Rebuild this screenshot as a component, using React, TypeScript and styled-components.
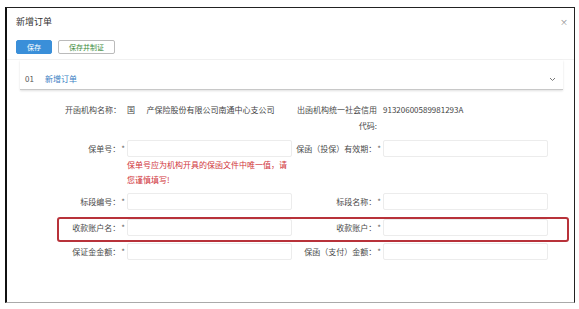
import styled, { createGlobalStyle } from "styled-components"

const GlobalStyle = createGlobalStyle`
    body {
        margin: 0;
        background: #fff;
        font-family: "Noto Sans CJK SC", "Noto Sans", sans-serif;
    }
`

const Frame = styled.div`
    box-sizing: border-box;
    margin: 7px 4px 0 5px;
    height: 296px;
    border-top: 1px solid #222;
    border-left: 2px solid #111;
    border-right: 1px solid #222;
    border-bottom: 1px solid #aaa;
    background: #fff;
`

const Header = styled.div`
    display: flex;
    justify-content: space-between;
    align-items: center;
    padding: 8px 6px 0 9px;
    height: 12px;
`

const Title = styled.span`
    font-size: 9px;
    line-height: 12px;
    color: #333;
`

const Close = styled.span`
    font-size: 8px;
    line-height: 12px;
    color: #888;
`

const Toolbar = styled.div`
    display: flex;
    gap: 6px;
    margin-top: 12px;
    padding: 0 0 5px 9px;
    border-bottom: 1px solid #f2f2f2;
`

const Button = styled.button<{ $primary?: boolean }>`
    height: 14px;
    padding: 0 ${p => (p.$primary ? "10px" : "10px")};
    border-radius: 2px;
    border: 1px solid ${p => (p.$primary ? "#3a8fd9" : "#bbb")};
    background: ${p => (p.$primary ? "#3a8fd9" : "#fff")};
    color: ${p => (p.$primary ? "#fff" : "#3c8c3c")};
    font-family: inherit;
    font-size: 7px;
    line-height: 12px;
    cursor: pointer;
`

const Card = styled.div`
    margin: 0 11px 0 13px;
`

const CardHead = styled.div`
    display: flex;
    align-items: center;
    padding: 13px 7px 4px 5px;
    border-bottom: 1px solid #c8c8c8;
    box-shadow: 0 1px 2px rgba(0, 0, 0, 0.12);
    font-size: 8px;
    line-height: 12px;
`

const StepNo = styled.span`
    color: #555;
    margin-right: 11px;
`

const StepName = styled.span`
    color: #3b7fc4;
    flex: 1;
`

const Form = styled.div`
    margin: 12px 0 0 20px;
    font-size: 8px;
    color: #4a4a4a;
`

const Row = styled.div<{ $top: number; $mark?: boolean }>`
    position: relative;
    display: grid;
    width: 521px;
    grid-template-columns: 100px 165px 91px 165px;
    align-items: center;
    margin-top: ${p => p.$top}px;

    ${p =>
        p.$mark &&
        `&::after {
            content: "";
            position: absolute;
            left: 30px;
            right: -21px;
            top: -2px;
            bottom: -6px;
            border: 2.5px solid #b8323a;
            border-radius: 3px;
            pointer-events: none;
        }`}
`

const Label = styled.label<{ $required?: boolean }>`
    text-align: right;
    line-height: 16px;
    padding-right: ${p => (p.$required ? "2px" : "6px")};
    color: #4a4a4a;
`

const Star = styled.span`
    color: #666;
    margin-left: 1px;
`

const Value = styled.span`
    line-height: 16px;
    color: #444;
    white-space: pre;
    align-self: start;
`

const Input = styled.input`
    box-sizing: border-box;
    width: 165px;
    height: 17px;
    border: 1px solid #ececec;
    border-radius: 2px;
    background: #fff;
    outline: none;
`

const Hint = styled.div`
    grid-column: 2;
    color: #d0343a;
    line-height: 15px;
`

const Field = ({ label }: { label: string }) => (
    <>
        <Label $required>
            {label}
            <Star>*</Star>
        </Label>
        <Input />
    </>
)

export default function App() {
    return (
        <>
            <GlobalStyle />
            <Frame>
                <Header>
                    <Title>新增订单</Title>
                    <Close>×</Close>
                </Header>
                <Toolbar>
                    <Button $primary>保存</Button>
                    <Button>保存并制证</Button>
                </Toolbar>
                <Card>
                    <CardHead>
                        <StepNo>01</StepNo>
                        <StepName>新增订单</StepName>
                        <svg width="7" height="5" viewBox="0 0 7 5">
                            <path d="M1 1l2.5 2.5L6 1" fill="none" stroke="#777" strokeWidth="1" />
                        </svg>
                    </CardHead>
                </Card>
                <Form>
                    <Row $top={0} style={{ alignItems: "start" }}>
                        <Label>开函机构名称：</Label>
                        <Value>{"国\u3000  产保险股份有限公司南通中心支公司"}</Value>
                        <Label>出函机构统一社会信用代码:</Label>
                        <Value>91320600589981293A</Value>
                    </Row>
                    <Row $top={6}>
                        <Field label="保单号：" />
                        <Field label="保函（投保）有效期：" />
                        <Hint>保单号应为机构开具的保函文件中唯一值，请您谨慎填写!</Hint>
                    </Row>
                    <Row $top={6}>
                        <Field label="标段编号：" />
                        <Field label="标段名称：" />
                    </Row>
                    <Row $top={9} $mark>
                        <Field label="收款账户名：" />
                        <Field label="收款账户：" />
                    </Row>
                    <Row $top={7}>
                        <Field label="保证金金额：" />
                        <Field label="保函（支付）金额：" />
                    </Row>
                </Form>
            </Frame>
        </>
    )
}
